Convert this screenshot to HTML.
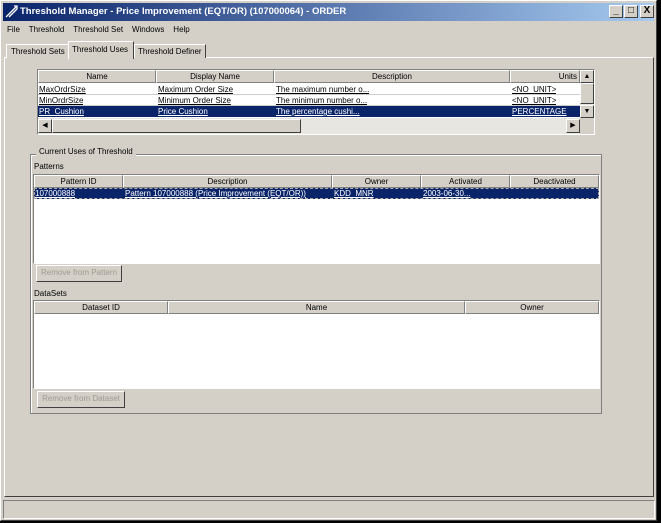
<!DOCTYPE html>
<html><head><style>
*{box-sizing:border-box;margin:0;padding:0}
body{width:661px;height:523px;background:#000;font-family:"Liberation Sans",sans-serif;font-size:8px;color:#000;position:relative;overflow:hidden}
.a{position:absolute}
.win{left:0;top:0;width:657px;height:521px;background:#d4d0c8;border:1px solid #fff;border-right-color:#404040;border-bottom-color:#404040}
.title{left:3px;top:3px;width:651px;height:18px;background:linear-gradient(90deg,#0a246a,#a6caf0);color:#fff;font-weight:bold;font-size:9.5px;line-height:18px;padding-left:17px}
.tb{top:5px;width:14px;height:13px;background:#d4d0c8;border:1px solid #fff;border-right-color:#404040;border-bottom-color:#404040;font-size:10px;line-height:10px;text-align:center;font-weight:bold}
.rz{border:1px solid #808080;border-right-color:#fff;border-bottom-color:#fff}
.raise{border:1px solid #fff;border-right-color:#404040;border-bottom-color:#404040;background:#d4d0c8}
.hd{height:13px;line-height:12px;text-align:center;border:1px solid #fff;border-right-color:#808080;border-bottom-color:#808080;background:#d4d0c8;white-space:nowrap;overflow:hidden}
.cell{height:11px;line-height:10px;padding-left:1px;white-space:nowrap;overflow:hidden;text-decoration:underline}
.sel{background:#0a246a;color:#fff}
.btn{color:#9c9a94;text-align:center;line-height:14px}
</style></head><body>
<div class="a win"></div>
<div class="a title">Threshold Manager - Price Improvement (EQT/OR) (107000064) - ORDER</div>
<svg class="a" style="left:5px;top:5px" width="13" height="13"><path d="M1 12 L11 2 M4 12 L12 4 M9 1 L12 1 L12 4" stroke="#fff" stroke-width="1.3" fill="none"/></svg>
<div class="a tb" style="left:609px">_</div>
<div class="a tb" style="left:624px">□</div>
<div class="a tb" style="left:640px">X</div>
<div class="a" style="left:7px;top:25px;word-spacing:0">File&nbsp;&nbsp;&nbsp;&nbsp;Threshold&nbsp;&nbsp;&nbsp;&nbsp;Threshold Set&nbsp;&nbsp;&nbsp;&nbsp;Windows&nbsp;&nbsp;&nbsp;&nbsp;Help</div>
<!-- tab panel -->
<div class="a raise" style="left:4px;top:57px;width:650px;height:440px"></div>
<div class="a raise" style="left:6px;top:44px;width:63px;height:14px;padding-left:4px;line-height:13px;border-bottom:none">Threshold Sets</div>
<div class="a raise" style="left:134px;top:44px;width:72px;height:14px;padding-left:3px;line-height:13px;border-bottom:none">Threshold Definer</div>
<div class="a raise" style="left:68px;top:41px;width:66px;height:18px;padding-left:3px;line-height:15px;border-bottom:none">Threshold Uses</div>
<!-- top table -->
<div class="a rz" style="left:37px;top:69px;width:558px;height:66px;background:#d4d0c8"></div>
<div class="a" style="left:38px;top:70px;width:542px;height:48px;background:#fff"></div>
<div class="a hd" style="left:38px;top:70px;width:118px">Name</div>
<div class="a hd" style="left:156px;top:70px;width:118px">Display Name</div>
<div class="a hd" style="left:274px;top:70px;width:236px">Description</div>
<div class="a hd" style="left:510px;top:70px;width:70px;text-align:right;padding-right:2px">Units</div>
<div class="a" style="left:38px;top:84px;width:542px;height:11px;border-bottom:1px solid #ccc"></div>
<div class="a" style="left:38px;top:95px;width:542px;height:11px;border-bottom:1px solid #ccc"></div>
<div class="a sel" style="left:38px;top:106px;width:542px;height:11px"></div>
<div class="a cell" style="left:38px;top:85px">MaxOrdrSize</div><div class="a cell" style="left:157px;top:85px">Maximum Order Size</div><div class="a cell" style="left:275px;top:85px">The maximum number o...</div><div class="a cell" style="left:511px;top:85px">&lt;NO_UNIT&gt;</div>
<div class="a cell" style="left:38px;top:96px">MinOrdrSize</div><div class="a cell" style="left:157px;top:96px">Minimum Order Size</div><div class="a cell" style="left:275px;top:96px">The minimum number o...</div><div class="a cell" style="left:511px;top:96px">&lt;NO_UNIT&gt;</div>
<div class="a cell" style="left:38px;top:107px;color:#fff">PR_Cushion</div><div class="a cell" style="left:157px;top:107px;color:#fff">Price Cushion</div><div class="a cell" style="left:275px;top:107px;color:#fff">The percentage cushi...</div><div class="a cell" style="left:511px;top:107px;color:#fff">PERCENTAGE</div>
<div class="a" style="left:580px;top:70px;width:14px;height:48px;background:#e8e6e0"></div>
<div class="a raise" style="left:580px;top:70px;width:14px;height:13px;text-align:center;font-size:7px;line-height:11px">▲</div>
<div class="a raise" style="left:580px;top:83px;width:14px;height:21px"></div>
<div class="a raise" style="left:580px;top:105px;width:14px;height:13px;text-align:center;font-size:7px;line-height:11px">▼</div>
<div class="a" style="left:38px;top:118px;width:542px;height:16px;background:#e8e6e0"></div>
<div class="a raise" style="left:38px;top:119px;width:14px;height:14px;text-align:center;font-size:7px;line-height:12px">◀</div>
<div class="a raise" style="left:52px;top:119px;width:249px;height:14px"></div>
<div class="a raise" style="left:566px;top:119px;width:14px;height:14px;text-align:center;font-size:7px;line-height:12px">▶</div>
<!-- group -->
<div class="a" style="left:30px;top:154px;width:572px;height:260px;border:1px solid #808080;box-shadow:1px 1px 0 #fff inset"></div>
<div class="a" style="left:36px;top:147px;background:#d4d0c8;padding:0 3px">Current Uses of Threshold</div>
<div class="a" style="left:34px;top:162px">Patterns</div>
<div class="a rz" style="left:33px;top:174px;width:567px;height:90px;background:#fff"></div>
<div class="a hd" style="left:34px;top:175px;width:89px">Pattern ID</div>
<div class="a hd" style="left:123px;top:175px;width:209px">Description</div>
<div class="a hd" style="left:332px;top:175px;width:89px">Owner</div>
<div class="a hd" style="left:421px;top:175px;width:89px">Activated</div>
<div class="a hd" style="left:510px;top:175px;width:89px">Deactivated</div>
<div class="a sel" style="left:34px;top:188px;width:565px;height:11px;border:1px dashed #aaa"></div>
<div class="a cell" style="left:34px;top:189px;color:#fff">107000888</div><div class="a cell" style="left:124px;top:189px;color:#fff">Pattern 107000888 (Price Improvement (EQT/OR))</div><div class="a cell" style="left:333px;top:189px;color:#fff">KDD_MNR</div><div class="a cell" style="left:422px;top:189px;color:#fff">2003-06-30...</div>
<div class="a raise btn" style="left:36px;top:265px;width:86px;height:17px">Remove from Pattern</div>
<div class="a" style="left:34px;top:289px">DataSets</div>
<div class="a rz" style="left:33px;top:300px;width:567px;height:89px;background:#fff"></div>
<div class="a hd" style="left:34px;top:301px;width:134px">Dataset ID</div>
<div class="a hd" style="left:168px;top:301px;width:297px">Name</div>
<div class="a hd" style="left:465px;top:301px;width:134px">Owner</div>
<div class="a raise btn" style="left:37px;top:391px;width:88px;height:17px">Remove from Dataset</div>
<!-- status -->
<div class="a rz" style="left:3px;top:500px;width:652px;height:19px"></div>
</body></html>
